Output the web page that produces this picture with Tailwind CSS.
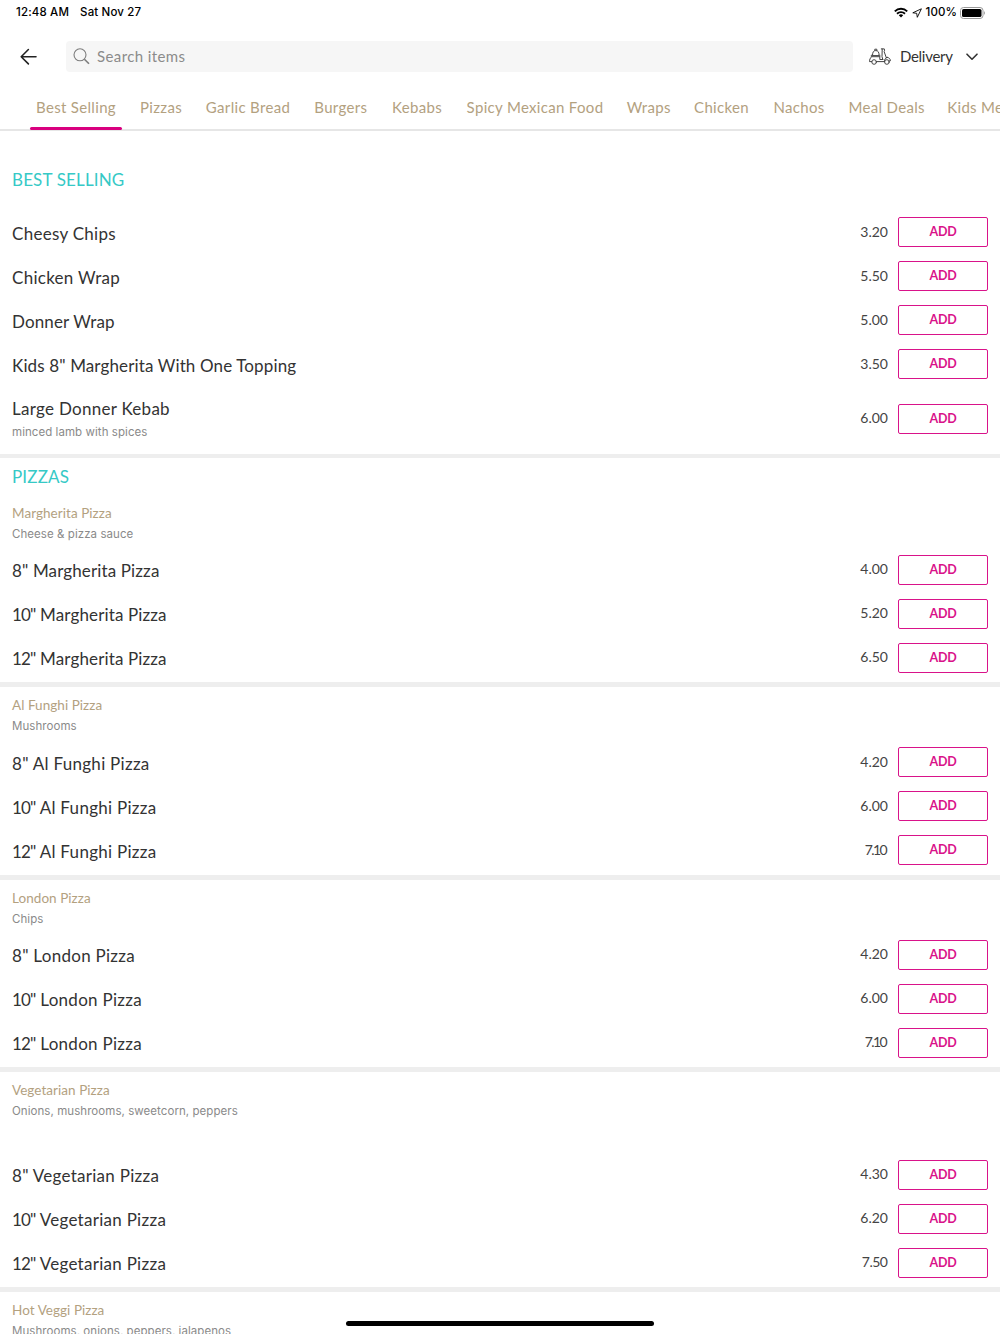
<!DOCTYPE html>
<html lang="en">
<head>
    <title>Menu</title>
    <meta charset="UTF-8">
    <meta name="viewport" content="width=device-width, initial-scale=1.0">
    <script src="https://cdn.jsdelivr.net/npm/@tailwindcss/browser@4"></script>
</head>
<body class="relative flex h-[1334px] w-[1000px] flex-col overflow-hidden bg-white font-['Lato',sans-serif] text-[#333333]">

    <!-- Status bar -->
    <div class="flex h-6 shrink-0 items-center justify-between pl-4 pr-[15px] pt-px font-['Inter',sans-serif] text-[11.5px] font-medium text-black">
        <div class="flex gap-[11px]">
            <span class="tracking-[0.15px]">12:48 AM</span>
            <span class="tracking-[0.15px]">Sat Nov 27</span>
        </div>
        <div class="flex items-center">
            <svg class="mr-[4px] h-[11px] w-[14px]" viewBox="0 0 14 11" fill="none" stroke="#000" stroke-width="1.9">
                <path d="M0.8 4.3a8.8 8.8 0 0 1 12.4 0"/>
                <path d="M3 6.8a5.7 5.7 0 0 1 8 0"/>
                <path d="M7 10.6L4.8 8.3a3.2 3.2 0 0 1 4.4 0z" fill="#000" stroke="none"/>
            </svg>
            <svg class="mr-[4px] h-[10px] w-[10px]" viewBox="0 0 10 10" fill="none" stroke="#000" stroke-width="0.9" stroke-linejoin="round">
                <path d="M9.4 0.8L0.8 4.8l3.900.5.6 4z"/>
            </svg>
            <span class="mr-[3px] tracking-[0.1px]">100%</span>
            <svg class="h-[12px] w-[25px]" viewBox="0 0 25 12">
                <rect x="0.5" y="0.5" width="22.5" height="11" rx="3" fill="none" stroke="#999"/>
                <rect x="2" y="2" width="19.5" height="8" rx="1.6" fill="#000"/>
                <path d="M24 4.2v3.6c1.2-.5 1.2-3.1 0-3.6z" fill="#999"/>
            </svg>
        </div>
    </div>

    <!-- Header -->
    <header class="flex h-[65px] shrink-0 items-center pl-5 pr-[22px]">
        <svg class="mr-[29px] h-[18px] w-[17px]" viewBox="0 0 17 18" fill="none" stroke="#222" stroke-width="1.6" stroke-linecap="round" stroke-linejoin="round">
            <path d="M16 8.700H1.200M8.400 1.500L1.200 8.700l7.200 7.200"/>
        </svg>
        <div class="flex h-[31px] w-[787px] items-center rounded-[4px] bg-[#f6f6f6] pl-[7px]">
            <svg class="mr-[7px] h-[17px] w-[17px]" viewBox="0 0 17 17" fill="none" stroke="#7d7d7d" stroke-width="1.1">
                <circle cx="7" cy="6.800" r="6"/>
                <path d="M11.400 11.200l4.600 4.600" stroke-width="1.6"/>
            </svg>
            <span class="text-[15px] tracking-[0.4px] text-[#8b8b8b]">Search items</span>
        </div>
        <svg class="ml-4 h-[17px] w-[22px]" viewBox="0 0 22 17" fill="none" stroke="#444" stroke-width="1" stroke-linejoin="round" stroke-linecap="round">
            <path d="M3.500 7.200C3.500 4 4.600 2.600 6.800 2.600s3.300 1.400 3.300 4.600zM5.800 2.400V1.200h2v1.200"/>
            <path d="M3.500 7.200H2.300v1.500h8.500V7.200M2.500 8.900C1.200 10 .5 11.600.5 13.600h2.200M7.500 13.600h7.800M10.800 8.900v2.600h3"/>
            <path d="M12.300.9h3l.3 1.900-.6.500 2.300 6.300M13.200 1.100l-.2 7.600.8 2.800M15.300 13.600c0-2.200 1.300-3.800 3.300-4.200 1.600.4 2.600 1.500 2.900 3.300l-1.200.2M17.300 9.600l1.300-.2"/>
            <circle cx="5.100" cy="14" r="2.300"/>
            <circle cx="17.900" cy="14" r="2.300"/>
        </svg>
        <span class="ml-[9px] w-[53px] whitespace-nowrap text-[15px] tracking-[-0.3px]">Delivery</span>
        <svg class="ml-[13px] h-[8px] w-[12px]" viewBox="0 0 12 8" fill="none" stroke="#333" stroke-width="1.6" stroke-linecap="round" stroke-linejoin="round">
            <path d="M1 1.200l5 5 5-5"/>
        </svg>
    </header>

    <!-- Category tabs -->
    <nav id="tabs" class="flex h-[42px] shrink-0 border-b-2 border-[#e6e6e6] pl-[30px] text-[15px] tracking-[0.32px] text-[#b3a17f]"></nav>

    <!-- Menu -->
    <main id="menu" class="flex shrink-0 flex-col"></main>

    <!-- Home indicator -->
    <div class="absolute left-[346px] top-[1321px] h-[5px] w-[308px] rounded-full bg-black"></div>

    <script>
        // label, tab width
        const tabs = [
            ['Best Selling', 92], ['Pizzas', 66], ['Garlic Bread', 108], ['Burgers', 77.5],
            ['Kebabs', 75], ['Spicy Mexican Food', 161], ['Wraps', 66.5], ['Chicken', 79],
            ['Nachos', 76], ['Meal Deals', 99.5], ['Kids Meals', 96]
        ];

        const pizza = (name, desc, prices, tall) => ({
            name: name + ' Pizza', desc, tall,
            items: ['8"', '10"', '12"'].map((size, i) => [
                `<span class="${i ? 'tracking-[-0.8px]' : ''}">${size}</span> ${name} Pizza`, prices[i]
            ])
        });

        const groups = [
            {
                title: 'BEST SELLING', first: true,
                items: [
                    ['Cheesy Chips', '3.20'],
                    ['Chicken Wrap', '5.50'],
                    ['Donner Wrap', '5.00'],
                    ['Kids 8" Margherita With One Topping', '3.50'],
                    ['Large Donner Kebab', '6.00', 'minced lamb with spices']
                ]
            },
            { title: 'PIZZAS', ...pizza('Margherita', 'Cheese &amp; pizza sauce', ['4.00', '5.20', '6.50']) },
            pizza('Al Funghi', 'Mushrooms', ['4.20', '6.00', '7.10']),
            pizza('London', 'Chips', ['4.20', '6.00', '7.10']),
            pizza('Vegetarian', 'Onions, mushrooms, sweetcorn, peppers', ['4.30', '6.20', '7.50'], true),
            { name: 'Hot Veggi Pizza', desc: 'Mushrooms, onions, peppers, jalapenos', items: [] }
        ];

        const descClass = "font-['Inter',sans-serif] text-[11.5px] leading-4 tracking-[0.06px] text-[#8a8a8a]";

        const nameTracking = name => /Margherita|Donner Wrap/.test(name) ? 'tracking-[0.13px]' : 'tracking-[0.28px]';

        const row = ([name, price, desc]) => `
            <div class="flex ${desc ? 'h-[65px]' : 'h-11'} items-center">
                <div class="flex-1 ${desc ? '-mt-px' : 'pt-[3px]'}">
                    <div class="text-[17px] leading-6 ${nameTracking(name)}">${name}</div>
                    ${desc ? `<div class="${descClass} pt-[3px]">${desc}</div>` : ''}
                </div>
                <span class="${price === '7.10' ? 'mr-[12px] tracking-[-1.6px]' : price === '7.50' ? 'mr-[10.5px] tracking-[-0.5px]' : 'mr-[10px]'} pb-px text-[14px] leading-5 text-[#444444]">${price}</span>
                <button class="h-[30px] w-[90px] rounded-[2px] border border-[#d9138a] pt-px text-[12.5px] font-bold tracking-[-0.3px] text-[#d9138a]">ADD</button>
            </div>`;

        const group = g => `
            <section class="px-3 pb-[2.5px]">
                ${g.title ? `<h2 class="${g.first ? 'h-[79px] pt-[37px]' : 'h-[36.7px] pt-[7px]'} text-[17px] leading-6 tracking-[0.15px] text-[#36c9c6]">${g.title}</h2>` : ''}
                ${g.name ? `<div class="${g.tall ? 'h-[81px]' : 'h-[53px]'} pt-[8px]">
                    <h3 class="text-[13.5px] leading-5 tracking-[0.05px] text-[#b3a17f]">${g.name}</h3>
                    <p class="${descClass} pt-[3px]">${g.desc}</p>
                </div>` : ''}
                ${g.items.map(row).join('')}
            </section>`;

        document.getElementById('tabs').innerHTML = tabs.map(([label, width], i) => `
            <div class="relative flex shrink-0 justify-center whitespace-nowrap pt-[4px] leading-7 ${i === 0 ? 'mr-[6px]' : ''}" style="width:${width}px">${label}
                ${i === 0 ? '<div class="absolute inset-x-0 -bottom-[0.5px] h-[3px] rounded-full bg-[#d9007f]"></div>' : ''}
            </div>`).join('');

        document.getElementById('menu').innerHTML = groups.map(group).join('<div class="h-[4.8px] bg-[#eeeeee]"></div>');
    </script>
</body>
</html>
